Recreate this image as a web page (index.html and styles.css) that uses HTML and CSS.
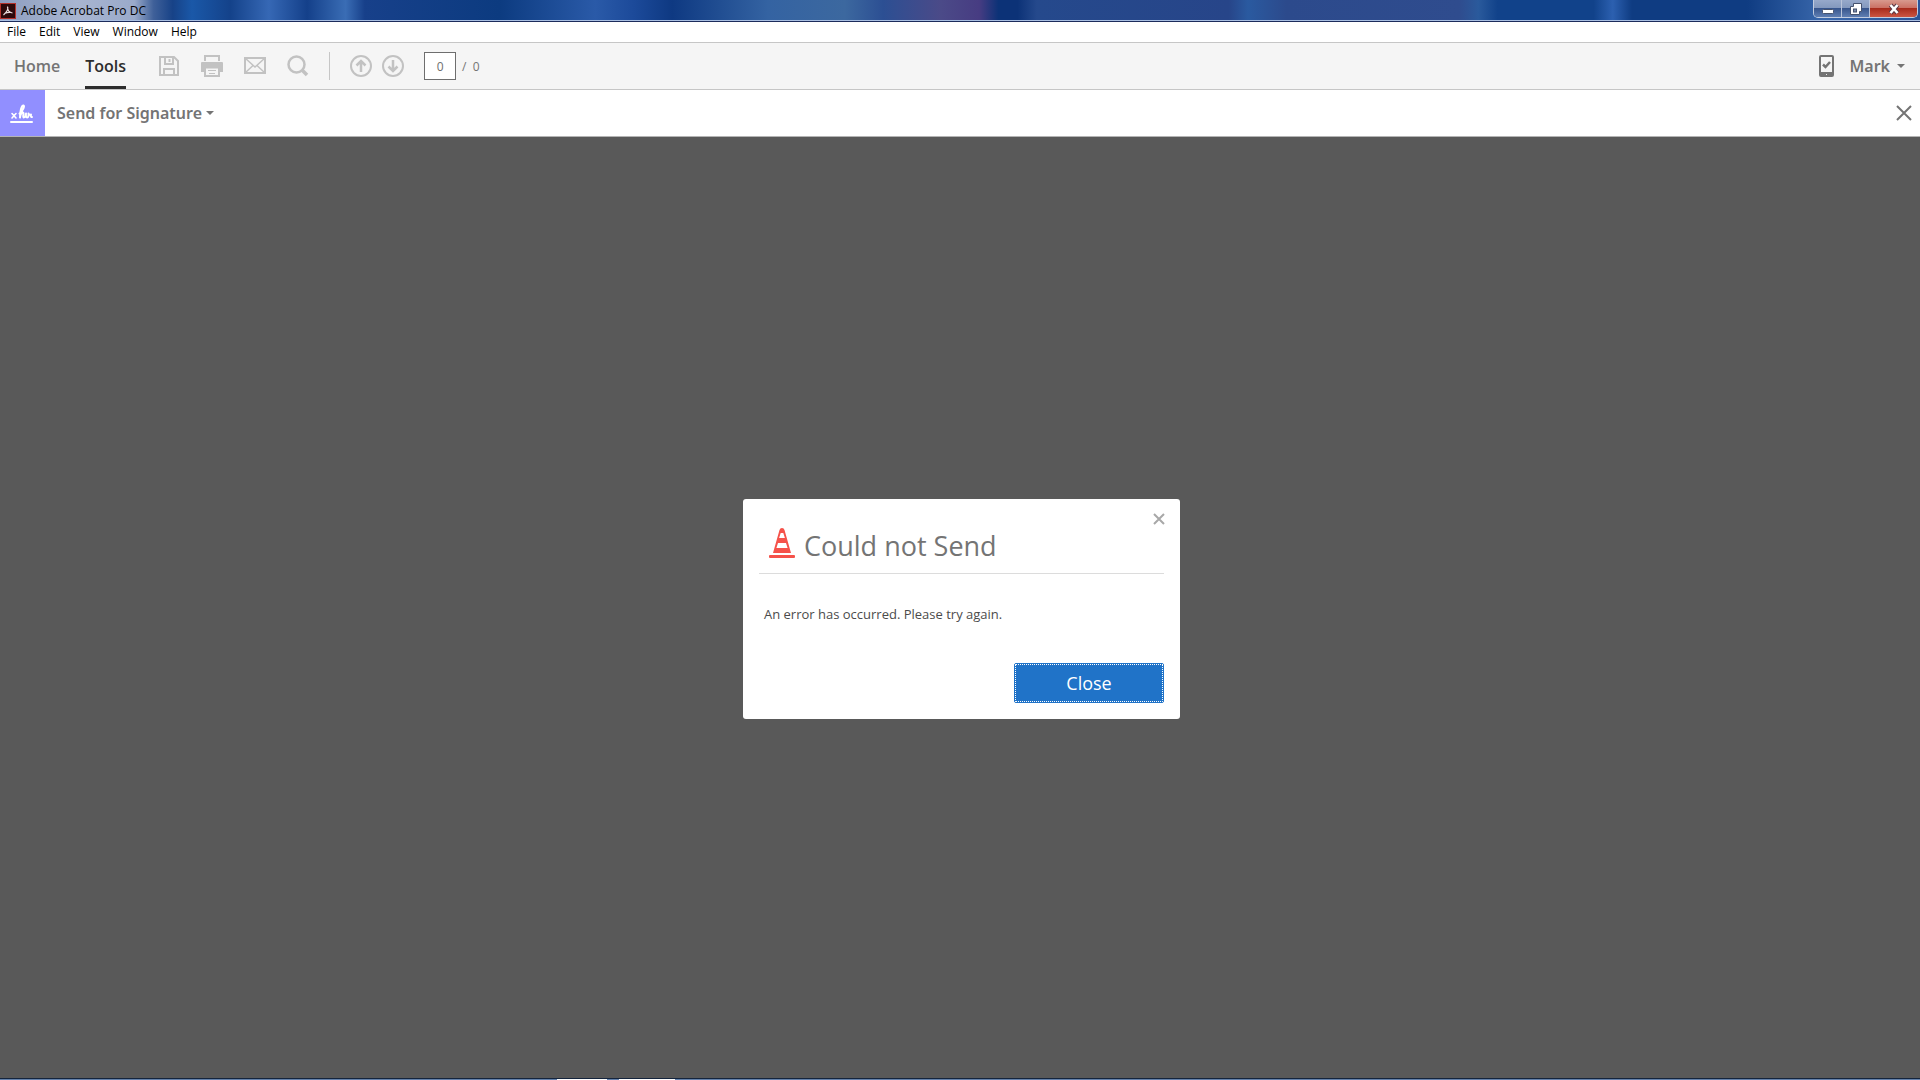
FILE: index.html
```html
<!DOCTYPE html>
<html lang="en">
<head>
    <meta charset="UTF-8">
    <meta name="viewport" content="width=device-width, initial-scale=1.0">
    <title>Adobe Acrobat Pro DC</title>
    <link rel="stylesheet" href="styles.css">
</head>
<body>
    <header class="titlebar">
        <svg class="app-icon" width="16" height="16" viewBox="0 0 16 16">
            <rect x="0.5" y="0.5" width="15" height="15" fill="#2c0a0c" stroke="#b3322c"/>
            <path d="M7.5 3.5c1.500 2-1 6-4 8.500M7.500 4c0 3 2 5.500 5 6M4.500 10.500c2-1 4.500-1.500 7-1" fill="none" stroke="#e8dcdc" stroke-width="1.200"/>
        </svg>
        <span class="app-title">Adobe Acrobat Pro DC</span>
        <div class="window-buttons">
            <button class="win-btn minimize" aria-label="Minimize">
                <svg width="12" height="12" viewBox="0 0 12 12"><rect x="0.5" y="6.500" width="11" height="4" rx="1" fill="#fff" stroke="#46536e"/></svg>
            </button>
            <button class="win-btn restore" aria-label="Restore">
                <svg width="12" height="12" viewBox="0 0 12 12"><path d="M3.500 0.500h8v8h-2v3h-9v-8h3z" fill="#fff" stroke="#46536e"/><rect x="3.500" y="6" width="3" height="3" fill="#7b8cab" stroke="#46536e"/></svg>
            </button>
            <button class="win-btn close" aria-label="Close window">
                <svg width="12" height="12" viewBox="0 0 12 12"><path d="M2.500 2l7 8M9.500 2l-7 8" stroke="#5c3a46" stroke-width="4.500"/><path d="M2.500 2l7 8M9.500 2l-7 8" stroke="#fff" stroke-width="2.600"/></svg>
            </button>
        </div>
    </header>

    <nav class="menubar">
        <a href="#">File</a>
        <a href="#">Edit</a>
        <a href="#">View</a>
        <a href="#">Window</a>
        <a href="#">Help</a>
    </nav>

    <div class="toolbar">
        <a class="tab" href="#">Home</a>
        <a class="tab active" href="#">Tools</a>
        <div class="file-tools">
            <button aria-label="Save">
                <svg width="22" height="22" viewBox="0 0 22 22" fill="none" stroke="#c2c2c2" stroke-width="2"><path d="M2 2h14l4 4v14H2z"/><path d="M7 2v7h8V2M6 20v-6h10v6"/><path d="M11.500 4v3" /></svg>
            </button>
            <button aria-label="Print">
                <svg width="22" height="22" viewBox="0 0 22 22"><path d="M4 6V1h14v5" fill="none" stroke="#c2c2c2" stroke-width="2"/><path d="M1 7h20q1 0 1 1v9h-4v-5H4v5H0V8q0-1 1-1z" fill="#c2c2c2"/><path d="M4 12.500h14V21H4z" fill="#f5f5f5" stroke="#c2c2c2" stroke-width="2"/><path d="M7 15.500h8M8 18.500h6" stroke="#c2c2c2"/></svg>
            </button>
            <button aria-label="Send email">
                <svg width="22" height="22" viewBox="0 0 22 22" fill="none" stroke="#c2c2c2"><path d="M1 3h20v15H1z" stroke-width="2"/><path d="M1 3l10 9 10-9M1 18l8-7.500M21 18l-8-7.500" stroke-width="1.500"/></svg>
            </button>
            <button aria-label="Find">
                <svg width="22" height="22" viewBox="0 0 22 22" fill="none" stroke="#c2c2c2"><circle cx="9.500" cy="9.500" r="8" stroke-width="2.500"/><path d="M15 15l5 5" stroke-width="3.500"/></svg>
            </button>
        </div>
        <div class="page-tools">
            <button aria-label="Previous page">
                <svg width="22" height="22" viewBox="0 0 22 22" fill="none" stroke="#c2c2c2" stroke-width="2"><circle cx="11" cy="11" r="10"/><path d="M11 17V6M6.500 10.500L11 6l4.500 4.500" stroke-width="2.500"/></svg>
            </button>
            <button aria-label="Next page">
                <svg width="22" height="22" viewBox="0 0 22 22" fill="none" stroke="#c2c2c2" stroke-width="2"><circle cx="11" cy="11" r="10"/><path d="M11 5v11M6.500 11.500L11 16l4.500-4.500" stroke-width="2.500"/></svg>
            </button>
        </div>
        <input class="page-number" type="text" value="0" aria-label="Page number">
        <span class="page-total">/&nbsp; 0</span>
        <button class="mobile-link" aria-label="Mobile Link">
            <svg width="16" height="22" viewBox="0 0 16 22"><rect x="1" y="1" width="13" height="20" rx="1" fill="#f5f5f5" stroke="#747474" stroke-width="2"/><path d="M1 17h13v4H1z" fill="#747474"/><path d="M4 9.500l2.500 2.500L11 7" fill="none" stroke="#747474" stroke-width="2.500"/><path d="M7 19h1v1H7z" fill="#eee"/></svg>
        </button>
        <button class="user">Mark <span class="caret"></span></button>
    </div>

    <div class="toolheader">
        <div class="tool-icon">
            <svg width="24" height="20" viewBox="0 0 24 20" fill="none" stroke="#fff" stroke-linecap="round" stroke-linejoin="round"><path d="M2 9.500l4 4.500M6 9.500L2 14" stroke-width="1.600"/><path d="M9.500 9.500C13 6.500 15 2 13.500 1.500c-2-.3-3.500 6-3.500 12 .5-3 1.500-5 3-5s-.8 4.500.7 5c1.300 0 2-1.500 2.300-4-.3 2.500 0 4 1.200 4s1.500-2 1.300-4c.5 1.500 2 1.500 2.500 1-.5 1.500.3 3 1 2.500" stroke-width="2"/><path d="M1 18h21" stroke-width="2"/></svg>
        </div>
        <button class="tool-name">Send for Signature<span class="caret"></span></button>
        <button class="tool-close" aria-label="Close tool">
            <svg width="16" height="16" viewBox="0 0 16 16"><path d="M1 1l14 14M15 1L1 15" stroke="#747474" stroke-width="2"/></svg>
        </button>
    </div>

    <main class="workspace">
        <section class="dialog" role="dialog" aria-labelledby="dialog-title">
            <button class="dialog-x" aria-label="Dismiss">
                <svg width="12" height="12" viewBox="0 0 12 12"><path d="M1 1l10 10M11 1L1 11" stroke="#a8a8a8" stroke-width="2"/></svg>
            </button>
            <div class="dialog-head">
                <svg width="26" height="32" viewBox="0 0 26 32"><path d="M10.500 3q.5-2 2.500-2t2.500 2L22 26H4z" fill="#f5524a"/><path d="M11.700 6h2.600l1.600 5h-5.800zM9 16h8l1.600 5H7.400z" fill="#fff"/><rect y="28" width="26" height="3" rx="1" fill="#f5524a"/></svg>
                <h1 id="dialog-title">Could not Send</h1>
            </div>
            <p>An error has occurred. Please try again.</p>
            <button class="dialog-close">Close</button>
        </section>
    </main>

    <footer class="taskbar">
        <span class="task"></span>
        <span class="task"></span>
    </footer>
</body>
</html>
```

FILE: styles.css
```css
* {
    box-sizing: border-box;
}

body {
    margin: 0;
    min-height: 100vh;
    display: flex;
    flex-direction: column;
    font-family: "Open Sans", "Noto Sans", sans-serif;
    background-color: #595959;
}

button {
    display: flex;
    align-items: center;
    justify-content: center;
    padding: 0;
    border: none;
    background: none;
    font-family: inherit;
    cursor: pointer;
}

a {
    color: inherit;
    text-decoration: none;
}

.titlebar {
    display: flex;
    align-items: center;
    height: 22px;
    border-bottom: 1px solid #1d2c5c;
    box-shadow: inset 0 -1px #a9bfe2;
    background: linear-gradient(90deg, #8d9dbf 0, #a8b5d0 4%, #9aaaca 7%, #3f6099 8%, #174287 9%, #1a58a8 10%, #14428a 12%, #3668b5 14%, #14408a 16%, #3a6db5 18%, #17408a 19%, #0c3b80 26%, #2a5aa8 31%, #1c4a9a 33%, #0e3982 35%, #3463a2 40%, #3c689f 44%, #2c4f93 46%, #4b4a88 49%, #473c82 51%, #0c3277 52%, #0c3277 53%, #25498c 54%, #274589 64%, #2a5aa0 65%, #2c4a8c 67%, #2f4c8e 76%, #2a5a9c 77%, #11428a 78%, #11428a 83%, #2c60b0 84%, #0f3c82 85%, #0f3c82 91%, #3a68ac 95%, #2a5498 100%);
}

.app-title {
    margin-left: 5px;
    font-size: 12px;
    line-height: 20px;
    color: #000;
}

.window-buttons {
    display: flex;
    align-self: flex-start;
    height: 18px;
    margin-left: auto;
    margin-right: 2px;
    border: 1px solid #c3cde0;
    border-top: none;
    border-radius: 0 0 5px 5px;
    overflow: hidden;
}

.win-btn {
    width: 28px;
    border-right: 1px solid #b9c4da;
    background: linear-gradient(#97a9ca 0, #8499be 45%, #38568d 50%, #5f7eb2 100%);
}

.win-btn.close {
    width: 47px;
    border-right: none;
    background: linear-gradient(#d89a8e 0, #cb7265 45%, #a82c1c 50%, #cc5543 100%);
}

.menubar {
    display: flex;
    gap: 13px;
    height: 20px;
    padding-left: 7px;
    background-color: #fff;
    font-size: 12px;
    line-height: 20px;
    color: #000;
}

.toolbar {
    display: flex;
    align-items: center;
    height: 48px;
    padding: 0 15px 0 14px;
    border-top: 1px solid #c6c6c6;
    border-bottom: 1px solid #c6c6c6;
    background-color: #f5f5f5;
}

.tab {
    height: 46px;
    margin-right: 25px;
    font-size: 16px;
    font-weight: 600;
    line-height: 46px;
    color: #747474;
}

.tab.active {
    margin-right: 32px;
    border-bottom: 3px solid #2d2d2d;
    color: #2d2d2d;
}

.file-tools {
    display: flex;
    gap: 21px;
    padding-right: 20px;
    border-right: 1px solid #c6c6c6;
    height: 28px;
}

.page-tools {
    display: flex;
    gap: 10px;
    margin: 0 20px;
}

.page-number {
    width: 32px;
    height: 28px;
    padding: 0;
    border: 1px solid #6e6e6e;
    background-color: #fff;
    font-family: inherit;
    font-size: 12px;
    text-align: center;
    color: #6e6e6e;
}

.page-total {
    margin-left: 6px;
    font-size: 12px;
    color: #747474;
}

.mobile-link {
    margin-left: auto;
}

.user,
.tool-name {
    font-family: "Noto Sans", sans-serif;
    font-size: 16px;
    font-weight: 600;
    color: #747474;
}

.user {
    margin-left: 14px;
}

.caret {
    border: 4px solid transparent;
    border-top-color: #747474;
    border-bottom: none;
}

.user .caret {
    margin-left: 7px;
}

.tool-name .caret {
    margin-left: 4px;
}

.toolheader {
    display: flex;
    align-items: center;
    height: 47px;
    padding-right: 8px;
    border-bottom: 1px solid #b4b4b4;
    background-color: #fff;
}

.tool-icon {
    display: flex;
    align-items: center;
    justify-content: center;
    align-self: stretch;
    width: 45px;
    margin-right: 12px;
    padding: 2px 2px 0 0;
    background-color: #918fff;
}

.tool-close {
    margin-left: auto;
}

.workspace {
    flex: 1;
    display: flex;
    align-items: center;
    justify-content: center;
    padding: 3px 0 0 3px;
    background-color: #595959;
}

.dialog {
    position: relative;
    display: flex;
    flex-direction: column;
    width: 437px;
    padding: 24px 16px 16px;
    border-radius: 3px;
    background-color: #fff;
}

.dialog-x {
    position: absolute;
    top: 14px;
    right: 15px;
}

.dialog-head {
    display: flex;
    align-items: flex-start;
    gap: 9px;
    height: 51px;
    padding: 4px 0 0 10px;
    border-bottom: 1px solid #dcdcdc;
}

.dialog-head h1 {
    margin: 0;
    font-size: 27px;
    font-weight: 400;
    line-height: 38px;
    color: #747474;
}

.dialog p {
    margin: 30px 5px 39px;
    font-size: 13px;
    line-height: 20px;
    color: #4b4b4b;
}

.dialog-close {
    align-self: flex-end;
    width: 150px;
    height: 40px;
    border: 1px solid #2073c8;
    border-radius: 2px;
    outline: 1px dotted #fff;
    outline-offset: -2px;
    background-color: #2073c8;
    font-size: 18px;
    color: #fff;
}

.taskbar {
    display: flex;
    gap: 12px;
    height: 2px;
    padding-left: 557px;
    border-top: 1px solid #14243c;
    background-color: #6482ac;
}

.task {
    width: 50px;
    background-color: #fff;
}

.task:last-child {
    width: 56px;
}
```
